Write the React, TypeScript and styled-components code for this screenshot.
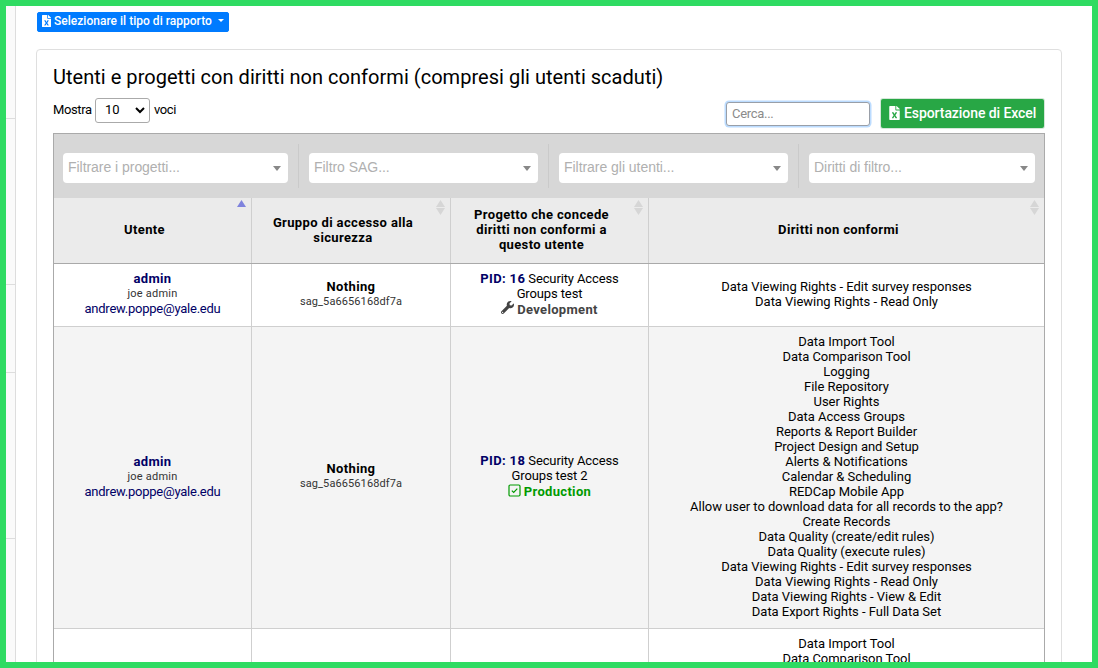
import React from "react";
import styled, { createGlobalStyle, css } from "styled-components";
import { FaFileExcel, FaWrench } from "react-icons/fa";

const GlobalStyle = createGlobalStyle`
  *, *::before, *::after { box-sizing: border-box; }
  body { margin: 0; background: #fff; }
`;

const Frame = styled.div`
  display: flex;
  width: 1098px;
  height: 668px;
  overflow: hidden;
  border: 6px solid #2fdb62;
  background: #fff;
  color: #000;
  font: 13px/15px Roboto, "Liberation Sans", sans-serif;
`;

const SideStrip = styled.aside`
  flex: none;
  width: 10px;
  background: #fafafa;
  border-right: 1px solid #ddd;
`;

const SideBlock = styled.div<{ $height: number }>`
  height: ${(p) => p.$height}px;
  border-bottom: 1px solid #ddd;
`;

const Main = styled.main`
  flex: 1;
  padding: 6px 30px 0 20px;
`;

const ReportButton = styled.button`
  display: flex;
  align-items: center;
  width: 192px;
  height: 20px;
  margin: 0 0 17px 1px;
  padding: 0 4px 2px;
  border: 1px solid #007bff;
  border-radius: 2px;
  background: #007bff;
  color: #fff;
  font: 500 12px/15px Roboto, sans-serif;
  letter-spacing: 0.02px;
  white-space: nowrap;
  svg {
    flex: none;
    width: 9px;
    height: 12px;
    margin-right: 3px;
  }
`;

const Caret = styled.span`
  margin: 0 0 1px 6px;
  border: 3px solid transparent;
  border-top-color: #fff;
  border-bottom: 0;
`;

const Card = styled.section`
  width: 1026px;
  height: 700px;
  padding: 15px 16px 0;
  border: 1px solid #dfdfdf;
  border-radius: 4px;
`;

const Title = styled.h1`
  margin: 0;
  font: 400 20px/24px Roboto, sans-serif;
  letter-spacing: 0.03px;
`;

const Controls = styled.div`
  display: flex;
  justify-content: space-between;
  height: 44px;
  padding: 9px 1px 0 0;
`;

const LengthLabel = styled.label`
  display: flex;
  align-items: center;
  height: 25px;
  gap: 4px;
`;

const LengthText = styled.span`
  width: 38px;
  margin-bottom: 2px;
  letter-spacing: -0.4px;
`;

const LengthSelect = styled.span`
  display: flex;
  align-items: center;
  justify-content: space-between;
  width: 55px;
  height: 25px;
  padding: 0 4px 2px 9px;
  border: 1px solid #aaa;
  border-radius: 3px;
  svg { margin-top: 2px; }
`;

const Actions = styled.div`
  display: flex;
  align-items: flex-start;
  gap: 11px;
`;

const SearchInput = styled.input`
  width: 144px;
  height: 24px;
  margin: 4px 0 0;
  padding: 0 6px 1px 5px;
  border: 1px solid #999fa8;
  border-radius: 3px;
  outline: none;
  box-shadow: 0 0 0 1.5px #bcdcff;
  font: 13px Roboto, sans-serif;
  letter-spacing: -0.3px;
  &::placeholder { color: #8b8b8b; }
`;

const ExportButton = styled.button`
  display: flex;
  align-items: center;
  gap: 4px;
  width: 163px;
  height: 29px;
  margin-top: 1px;
  padding: 0 7px 2px 8px;
  border: 0;
  border-radius: 2px;
  background: #28a745;
  box-shadow: 0 0 0 1px #d5e7d9;
  color: #fff;
  font: 500 14px/18px Roboto, sans-serif;
  letter-spacing: -0.08px;
  white-space: nowrap;
  svg {
    flex: none;
    width: 11px;
    height: 14px;
  }
`;

const Table = styled.div`
  width: 992px;
  border: 1px solid #aaa;
`;

const Filters = styled.div`
  display: flex;
  height: 64px;
  padding: 10px 9px;
  background: #d7d7d7;
`;

const FilterCell = styled.div<{ $width: number }>`
  width: ${(p) => p.$width}px;
  height: 44px;
  padding: 9px 10px 0 0;
  & + & {
    padding-left: 10px;
    border-left: 1px solid #cacaca;
  }
  &:last-child { padding: 9px 0 0 10px; }
`;

const FilterSelect = styled.div`
  display: flex;
  align-items: center;
  justify-content: space-between;
  height: 30px;
  padding: 0 7px 2px 5px;
  border-radius: 4px;
  background: #fff;
  color: #b0b0b0;
  font: 14px/18px "Liberation Sans", Arial, sans-serif;
  letter-spacing: -0.04px;
`;

const FilterArrow = styled.span`
  margin-top: 3px;
  border: 4px solid transparent;
  border-top: 5px solid #888;
  border-bottom: 0;
`;

const rowGrid = css`
  display: grid;
  grid-template-columns: 198px 199px 198px 395px;
`;

const HeaderRow = styled.div`
  ${rowGrid}
  height: 66px;
  background: #ebebeb;
  border-bottom: 1px solid #a9a9a9;
`;

const HeaderCell = styled.div`
  display: flex;
  position: relative;
  align-items: center;
  justify-content: center;
  padding: 0 26px 3px 10px;
  border-right: 1px solid #cfcfcf;
  font-weight: 700;
  letter-spacing: 0.36px;
  text-align: center;
  white-space: pre-line;
  &:last-child { border-right: 0; }
  &:nth-child(2) { padding-bottom: 2px; }
`;

const SortMarks = styled.svg`
  position: absolute;
  top: 2px;
  right: 5px;
`;

const Row = styled.div<{ $height: number; $shaded?: boolean }>`
  ${rowGrid}
  height: ${(p) => p.$height}px;
  background: ${(p) => (p.$shaded ? "#f4f4f4" : "#fff")};
  border-bottom: 1px solid #cfcfcf;
`;

const Cell = styled.div<{ $fromTop?: boolean }>`
  display: flex;
  flex-direction: column;
  align-items: center;
  justify-content: ${(p) => (p.$fromTop ? "flex-start" : "center")};
  padding: ${(p) => (p.$fromTop ? "7px 0 0" : "0 0 3px")};
  border-right: 1px solid #cfcfcf;
  text-align: center;
  white-space: nowrap;
  &:last-child { border-right: 0; }
`;

const Strong = styled.strong<{ $navy?: boolean }>`
  color: ${(p) => (p.$navy ? "#000066" : "#000")};
  letter-spacing: 0.35px;
`;

const Small = styled.span<{ $spacing: number }>`
  font-size: 11px;
  letter-spacing: ${(p) => p.$spacing}px;
  color: #333;
`;

const Email = styled.a`
  color: #000066;
  letter-spacing: -0.24px;
`;

const Project = styled.span`
  letter-spacing: -0.12px;
`;

const Status = styled.span<{ $color: string }>`
  display: flex;
  align-items: center;
  gap: 3px;
  height: 15px;
  margin-top: 1px;
  color: ${(p) => p.$color};
  font-weight: 700;
  letter-spacing: 0.32px;
  svg { flex: none; margin-top: -3px; }
`;

const Right = styled.span`
  letter-spacing: -0.03px;
`;

const Sorter = ({ active }: { active?: boolean }) => (
  <SortMarks width="9" height="15" viewBox="0 0 9 15">
    <path d="M4.5 0 9 7H0z" fill={active ? "#7f83dd" : "#d6d6d6"} />
    {!active && <path d="M0 8h9l-4.5 7z" fill="#d6d6d6" />}
  </SortMarks>
);

const CheckBoxIcon = () => (
  <svg width="13" height="13" viewBox="0 0 13 13" fill="none" stroke="currentColor">
    <rect x="1" y="1" width="11" height="11" rx="1.2" strokeWidth="1.2" />
    <path d="m3.8 6.6 1.9 1.8 3.6-3.7" strokeWidth="1.2" />
  </svg>
);

const filters = [
  { label: "Filtrare i progetti...", width: 235 },
  { label: "Filtro SAG...", width: 250 },
  { label: "Filtrare gli utenti...", width: 250 },
  { label: "Diritti di filtro...", width: 237 },
];

const headers = [
  "Utente",
  "Gruppo di accesso alla\nsicurezza",
  "Progetto che concede\ndiritti non conformi a\nquesto utente",
  "Diritti non conformi",
];

const allRights = [
  "Data Import Tool",
  "Data Comparison Tool",
  "Logging",
  "File Repository",
  "User Rights",
  "Data Access Groups",
  "Reports & Report Builder",
  "Project Design and Setup",
  "Alerts & Notifications",
  "Calendar & Scheduling",
  "REDCap Mobile App",
  "Allow user to download data for all records to the app?",
  "Create Records",
  "Data Quality (create/edit rules)",
  "Data Quality (execute rules)",
  "Data Viewing Rights - Edit survey responses",
  "Data Viewing Rights - Read Only",
  "Data Viewing Rights - View & Edit",
  "Data Export Rights - Full Data Set",
];

const UserCell = () => (
  <Cell>
    <Strong $navy>admin</Strong>
    <Small $spacing={0.22}>joe admin</Small>
    <Email>andrew.poppe@yale.edu</Email>
  </Cell>
);

const GroupCell = () => (
  <Cell>
    <Strong>Nothing</Strong>
    <Small $spacing={0.1}>sag_5a6656168df7a</Small>
  </Cell>
);

const RightsCell = ({ rights, fromTop }: { rights: string[]; fromTop?: boolean }) => (
  <Cell $fromTop={fromTop}>
    {rights.map((right) => (
      <Right key={right}>{right}</Right>
    ))}
  </Cell>
);

export default function App() {
  return (
    <Frame>
      <GlobalStyle />
      <SideStrip>
        <SideBlock $height={113} />
        <SideBlock $height={166} />
        <SideBlock $height={88} />
        <SideBlock $height={166} />
      </SideStrip>
      <Main>
        <ReportButton>
          <FaFileExcel />
          Selezionare il tipo di rapporto
          <Caret />
        </ReportButton>
        <Card>
          <Title>Utenti e progetti con diritti non conformi (compresi gli utenti scaduti)</Title>
          <Controls>
            <LengthLabel>
              <LengthText>Mostra</LengthText>
              <LengthSelect>
                10
                <svg width="10" height="7" viewBox="0 0 10 7" fill="none" stroke="#000" strokeWidth="2">
                  <path d="m1 1 4 4 4-4" />
                </svg>
              </LengthSelect>
              <LengthText>voci</LengthText>
            </LengthLabel>
            <Actions>
              <SearchInput placeholder="Cerca..." />
              <ExportButton>
                <FaFileExcel />
                Esportazione di Excel
              </ExportButton>
            </Actions>
          </Controls>
          <Table>
            <Filters>
              {filters.map((filter) => (
                <FilterCell key={filter.label} $width={filter.width}>
                  <FilterSelect>
                    {filter.label}
                    <FilterArrow />
                  </FilterSelect>
                </FilterCell>
              ))}
            </Filters>
            <HeaderRow>
              {headers.map((header, index) => (
                <HeaderCell key={header}>
                  {header}
                  <Sorter active={index === 0} />
                </HeaderCell>
              ))}
            </HeaderRow>
            <Row $height={63}>
              <UserCell />
              <GroupCell />
              <Cell>
                <Project><Strong $navy>PID: 16</Strong> Security Access</Project>
                <Project>Groups test</Project>
                <Status $color="#444"><FaWrench size={13} />Development</Status>
              </Cell>
              <RightsCell rights={["Data Viewing Rights - Edit survey responses", "Data Viewing Rights - Read Only"]} />
            </Row>
            <Row $height={302} $shaded>
              <UserCell />
              <GroupCell />
              <Cell>
                <Project><Strong $navy>PID: 18</Strong> Security Access</Project>
                <Project>Groups test 2</Project>
                <Status $color="#009a00"><CheckBoxIcon />Production</Status>
              </Cell>
              <RightsCell rights={allRights} />
            </Row>
            <Row $height={302}>
              <Cell />
              <Cell />
              <Cell />
              <RightsCell rights={allRights.slice(0, 2)} fromTop />
            </Row>
          </Table>
        </Card>
      </Main>
    </Frame>
  );
}
